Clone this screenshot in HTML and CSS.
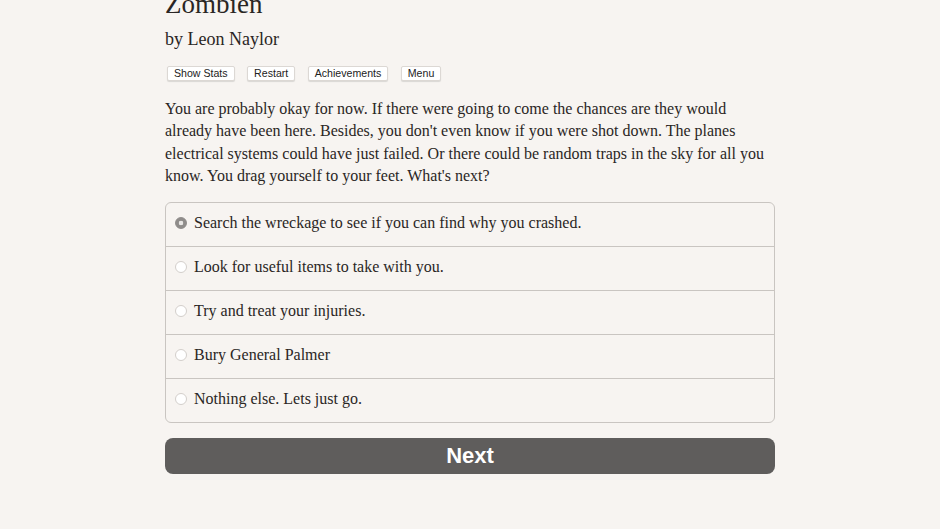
FILE: index.html
```html
<!DOCTYPE html>
<html>
<head>
<meta charset="utf-8">
<link rel="stylesheet" href="styles.css">
</head>
<body>
<main class="page">
  <h1 class="title">Zombien</h1>
  <h2 class="byline">by Leon Naylor</h2>
  <nav class="toolbar">
    <button class="tool">Show Stats</button>
    <button class="tool">Restart</button>
    <button class="tool">Achievements</button>
    <button class="tool">Menu</button>
  </nav>
  <p class="story">You are probably okay for now. If there were going to come the chances are they would already have been here. Besides, you don't even know if you were shot down. The planes electrical systems could have just failed. Or there could be random traps in the sky for all you know. You drag yourself to your feet. What's next?</p>
  <ul class="choices">
    <li class="choice"><span class="radio checked"></span>Search the wreckage to see if you can find why you crashed.</li>
    <li class="choice"><span class="radio"></span>Look for useful items to take with you.</li>
    <li class="choice"><span class="radio"></span>Try and treat your injuries.</li>
    <li class="choice"><span class="radio"></span>Bury General Palmer</li>
    <li class="choice"><span class="radio"></span>Nothing else. Lets just go.</li>
  </ul>
  <button class="next">Next</button>
</main>
</body>
</html>
```
FILE: styles.css
```css
html, body {
  margin: 0;
  padding: 0;
  background: #f7f4f1;
  height: 100%;
  overflow: hidden;
}
.page {
  width: 610px;
  margin: 0 auto;
  font-family: "Liberation Serif", "Times New Roman", serif;
  color: #2a2624;
}
.title {
  font-size: 27px;
  font-weight: normal;
  margin: -12px 0 0 0;
  line-height: 32px;
}
.byline {
  font-size: 18px;
  font-weight: normal;
  margin: 8px 0 0 0;
  line-height: 22px;
}
.toolbar {
  display: flex;
  gap: 12.5px;
  margin: 16px 0 0 2px;
}
.tool {
  font-family: "Liberation Sans", Arial, sans-serif;
  font-size: 10.6px;
  color: #222;
  background: #fff;
  border: 1px solid #dcd8d4;
  border-radius: 2px;
  box-shadow: 0 1px 1px rgba(0,0,0,0.12);
  padding: 0 6px;
  height: 15px;
  line-height: 13px;
}
.story {
  font-size: 16px;
  line-height: 22.3px;
  margin: 17px 0 0 0;
}
.choices {
  list-style: none;
  margin: 15px 0 0 0;
  padding: 0;
  border: 1px solid #c9c5c1;
  border-radius: 6px;
  overflow: hidden;
}
.choice {
  display: flex;
  align-items: center;
  height: 44px;
  box-sizing: border-box;
  padding: 0 0 4px 9px;
  font-size: 16px;
  border-top: 1px solid #c9c5c1;
}
.choice:first-child {
  border-top: none;
  height: 43px;
}
.radio {
  width: 12px;
  height: 12px;
  border-radius: 50%;
  background: #fff;
  border: 1px solid #d3cfcb;
  margin-right: 7px;
  flex: none;
  box-sizing: border-box;
}
.radio.checked {
  background: radial-gradient(circle, #e8e6e4 0 2px, #8f8c8a 2.6px);
  border-color: #8f8c8a;
}
.next {
  display: block;
  width: 100%;
  height: 36px;
  margin-top: 15px;
  background: #5f5d5c;
  color: #fff;
  border: none;
  border-radius: 8px;
  font-family: "Liberation Sans", Arial, sans-serif;
  font-weight: bold;
  font-size: 22px;
}
```
